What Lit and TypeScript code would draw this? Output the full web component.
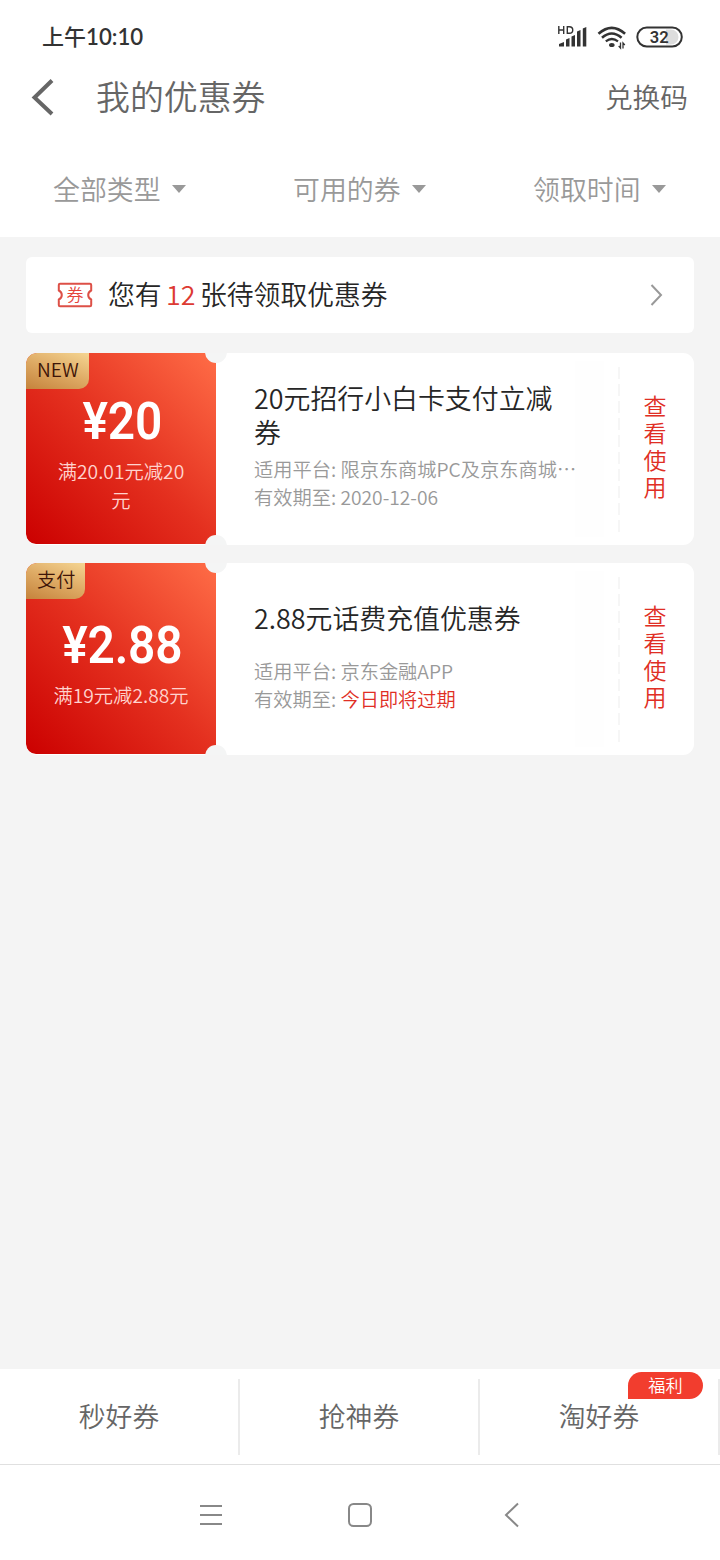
import { LitElement, html, css } from "lit";
import { customElement, property } from "lit/decorators.js";

interface Coupon {
  tag: string;
  amount: string;
  rule: string;
  title: string;
  platform: string;
  expiry: string;
  urgent: boolean;
}

const COUPONS: Coupon[] = [
  {
    tag: "NEW",
    amount: "20",
    rule: "满20.01元减20元",
    title: "20元招行小白卡支付立减券",
    platform: "限京东商城PC及京东商城…",
    expiry: "2020-12-06",
    urgent: false,
  },
  {
    tag: "支付",
    amount: "2.88",
    rule: "满19元减2.88元",
    title: "2.88元话费充值优惠券",
    platform: "京东金融APP",
    expiry: "今日即将过期",
    urgent: true,
  },
];

@customElement("coupon-card")
class CouponCard extends LitElement {
  @property({ attribute: false }) coupon!: Coupon;

  static styles = css`
    :host { display: block; }
    .card { display: flex; height: 192px; background: #fff; border-radius: 11px; position: relative; overflow: hidden; }
    .value {
      width: 190px; height: 191px; flex: none; box-sizing: border-box; position: relative;
      display: flex; flex-direction: column; align-items: center; padding-top: 41px;
      border-radius: 10px 0 0 10px; color: #fff;
      background: linear-gradient(45deg, #cb0000 0%, #e4301f 50%, #ff6d47 100%);
    }
    .value.single { padding-top: 55px; }
    .tag {
      position: absolute; left: 0; top: 0; height: 36px; line-height: 33px; padding: 0 10px 0 11px;
      font-size: 19.2px; color: #3e1508; border-radius: 10px 0 10px 0;
      background: linear-gradient(20deg, #c5833c 0%, #deaa64 50%, #f5d592 100%);
    }
    .amount { font: 600 52px/56px Roboto, sans-serif; letter-spacing: -0.2px; padding-left: 2px; white-space: nowrap; transform: scaleX(0.92); }
    .rule { width: 136px; margin-top: 7px; font-size: 19.3px; line-height: 28.5px; text-align: center; color: #ffd3ce; }
    .single .rule { width: 160px; }
    .notch { position: absolute; left: 179px; width: 22px; height: 22px; border-radius: 50%; background: #f4f5f5; }
    .notch.top { top: -12px; }
    .notch.bottom { bottom: -12px; }
    .info { width: 321px; padding: 28px 0 0 38px; flex: none; white-space: nowrap; }
    .title { width: 304px; font-size: 26.9px; line-height: 34px; color: #262626; white-space: normal; }
    .meta { font-size: 19.24px; line-height: 28px; color: #999; margin-top: 6px; }
    .info.single { padding-top: 38px; }
    .single .meta { margin-top: 22px; }
    .hot { color: #e02e24; }
    .sheen { width: 29px; margin: 8px 0; flex: none; background: #fefefe; }
    .perf {
      width: 2px; margin: 14px 0 12px 14px; flex: none;
      background: repeating-linear-gradient(#f6f6f6 0 12px, #fff 12px 17px);
    }
    .use {
      flex: 1; display: flex; align-items: center; justify-content: center;
      padding: 0 4px 0 0; color: #e02e24;
    }
    .use span { writing-mode: vertical-rl; font-size: 23px; letter-spacing: 4px; line-height: 30px; }
  `;

  render() {
    const c = this.coupon;
    const layout = c.title.length > 12 ? "" : "single";
    return html`
      <div class="card">
        <div class="value ${layout}">
          <div class="tag">${c.tag}</div>
          <div class="amount">¥${c.amount}</div>
          <div class="rule">${c.rule}</div>
        </div>
        <div class="notch top"></div>
        <div class="notch bottom"></div>
        <div class="info ${layout}">
          <div class="title">${c.title}</div>
          <div class="meta">
            <div>适用平台: ${c.platform}</div>
            <div>有效期至: <span class=${c.urgent ? "hot" : ""}>${c.expiry}</span></div>
          </div>
        </div>
        <div class="sheen"></div>
        <div class="perf"></div>
        <div class="use"><span>查看使用</span></div>
      </div>
    `;
  }
}

@customElement("app-root")
class AppRoot extends LitElement {
  static styles = css`
    :host {
      display: flex; flex-direction: column; width: 720px; height: 1560px; background: #f4f4f4;
      font-family: "Noto Sans CJK SC", sans-serif; font-weight: 350; color: #262626;
      overflow: hidden;
    }
    svg { display: block; flex: none; }
    .status { height: 74px; background: #fff; display: flex; align-items: center; padding: 0 37px 0 42px; box-sizing: border-box; flex: none; }
    .clock { flex: 1; display: flex; align-items: center; font-size: 22px; font-weight: 500; line-height: 30px; color: #333; }
    .clock span:first-child { padding-bottom: 4px; }
    .digits { font: 600 22.2px/30px Lato, sans-serif; }
    .head { height: 46px; background: #fff; display: flex; align-items: center; padding: 0 32px 0 31px; flex: none; }
    .name { flex: 1; margin-left: 42px; font-size: 33.9px; line-height: 46px; color: #666; padding-bottom: 2px; }
    .code { font-size: 27.7px; line-height: 40px; color: #666; padding-bottom: 3px; }
    .filters { height: 117px; background: #fff; display: grid; grid-template-columns: 1fr 1fr 1fr; flex: none; }
    .filter { display: flex; align-items: center; gap: 11px; padding: 21px 0 0 53px; height: 96px; font-size: 26.88px; line-height: 40px; color: #999; }
    .filter span { padding-bottom: 1px; }
    .list { flex: 1; display: flex; flex-direction: column; padding: 20px 26px 0; }
    .notice { height: 76px; box-sizing: border-box; background: #fff; border-radius: 6px; display: flex; align-items: center; padding: 0 31px; margin-bottom: 20px; font-size: 26.8px; line-height: 40px; }
    .ticket { width: 36px; height: 26px; position: relative; margin-right: 15px; }
    .ticket span { position: absolute; inset: 0; text-align: center; font-size: 17px; line-height: 23px; color: #e5453c; }
    .msg { flex: 1; padding-bottom: 2px; display: flex; }
    .msg b { font-weight: 350; color: #dd3a33; margin: 0 4.5px; }
    coupon-card + coupon-card { margin-top: 18px; }
    .tabs { height: 95px; background: #fff; display: grid; grid-template-columns: 1fr 1fr 1fr; border-bottom: 1px solid #e0e0e0; flex: none; }
    .tab { position: relative; display: flex; justify-content: center; margin: 10px 0 9px; border-right: 2px solid #ebebeb; font-size: 26.8px; line-height: 74px; color: #666; }
    .badge { position: absolute; left: 148px; top: -7px; width: 75px; height: 27px; border-radius: 13.5px 13.5px 13.5px 0; background: #f23d2e; color: #fff; font-size: 17.2px; line-height: 25px; text-align: center; }
    .nav { height: 95px; background: #fff; display: flex; justify-content: center; flex: none; }
  `;

  render() {
    return html`
      <div class="status">
        <div class="clock"><span>上午</span><span class="digits">10:10</span></div>
        <svg width="126" height="28" viewBox="557 23 126 28">
          <g fill="none" stroke="#333" stroke-width="1.4">
            <path d="M558.8 26v8M563.7 26v8M558.8 30h5M567.3 26.7v6.6h2c4.6 0 4.6-6.6 0-6.6z" />
          </g>
          <g fill="#333">
            <path d="M559 46.5v-2.5l5-2v4.5z" />
            <path d="M566 46.5v-7l3.5-1.5v8.5z" />
            <path d="M571.5 46.5v-10l3.5-1.5v11.5z" />
            <path d="M577 46.5v-15l3.5-1.5v16.5z" />
            <path d="M582.8 46.5v-18l3.5-1.5v19.5z" />
            <ellipse cx="611.8" cy="45" rx="2.8" ry="2" />
          </g>
          <g fill="none" stroke="#333" stroke-width="2.6">
            <path d="M598.5 33.8q13.2-12 26.6 0" />
            <path d="M602 37.7q9.7-8.4 19.6 0" />
            <path d="M605.8 41.4q6-4.800 12.200 0" stroke-width="2.2" />
            <path d="M620.5 42.5v5.5l-1.8-2M623 48.5v-5.5l1.8 2" stroke-width="1.3" />
          </g>
          <path d="M666 29.5h5a7.5 7.5 0 0 1 0 15h-5z" fill="#ddd" />
          <rect x="637.3" y="27.5" width="44.5" height="19" rx="9.5" fill="none" stroke="#333" stroke-width="2" />
          <text x="659.3" y="42.7" text-anchor="middle" font-family="Roboto, sans-serif" font-weight="600" font-size="16.5" fill="#333">32</text>
        </svg>
      </div>
      <div class="head">
        <svg width="23" height="38" viewBox="0 0 23 38"><path d="M21 2.5L3.5 19.5L21 36" fill="none" stroke="#666" stroke-width="4" /></svg>
        <div class="name">我的优惠券</div>
        <div class="code">兑换码</div>
      </div>
      <div class="filters">
        ${["全部类型", "可用的券", "领取时间"].map(
          (t) => html`<div class="filter"><span>${t}</span>
            <svg width="14" height="8" viewBox="0 0 14 8"><path d="M0 0h14l-7 8z" fill="#999" /></svg></div>`
        )}
      </div>
      <div class="list">
        <div class="notice">
          <div class="ticket">
            <svg width="36" height="26" viewBox="0 0 36 26">
              <path d="M3 1.8H33Q34.2 1.8 34.2 3V8.5Q31.2 10 31.2 13T34.2 17.5V23Q34.2 24.2 33 24.2H3Q1.8 24.2 1.8 23V17.5Q4.8 16 4.8 13T1.8 8.5V3Q1.8 1.8 3 1.8Z" fill="none" stroke="#dd5047" stroke-width="2" />
            </svg>
            <span>券</span>
          </div>
          <div class="msg">您有<b>12</b>张待领取优惠券</div>
          <svg width="13" height="22" viewBox="0 0 13 22"><path d="M1.5 1l9.5 10l-9.5 10" fill="none" stroke="#999" stroke-width="2" /></svg>
        </div>
        ${COUPONS.map((c) => html`<coupon-card .coupon=${c}></coupon-card>`)}
      </div>
      <div class="tabs">
        <div class="tab">秒好券</div>
        <div class="tab">抢神券</div>
        <div class="tab">淘好券<div class="badge">福利</div></div>
      </div>
      <div class="nav">
        <svg width="720" height="95" viewBox="0 1465 720 95" fill="none" stroke="#888" stroke-width="2">
          <path d="M200 1506h22M200 1515h22M200 1524h22" />
          <rect x="349" y="1504" width="22" height="22" rx="4.5" />
          <path d="M518 1503.5l-12 11.5l12 11.5" />
        </svg>
      </div>
    `;
  }
}
